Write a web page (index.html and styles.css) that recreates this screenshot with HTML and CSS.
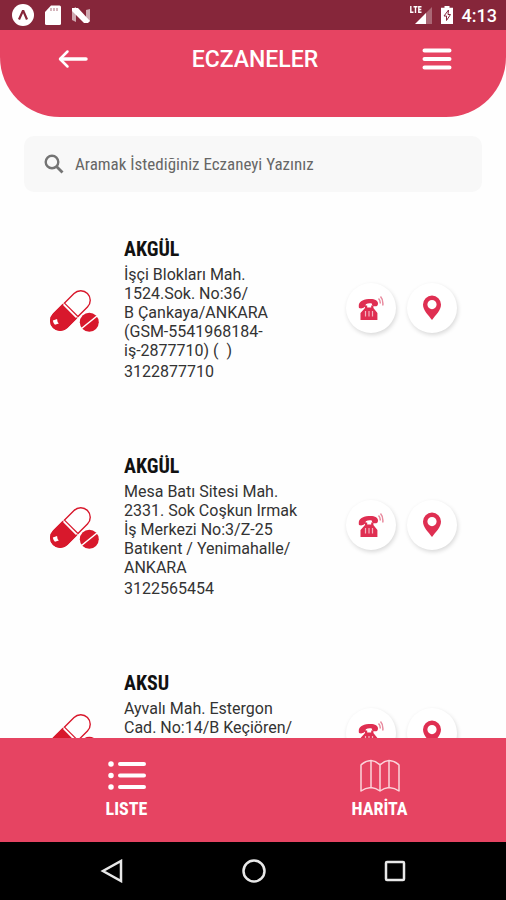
FILE: index.html
```html
<!DOCTYPE html>
<html lang="tr">
<head>
<meta charset="UTF-8">
<meta name="viewport" content="width=device-width, initial-scale=1.0">
<title>Eczaneler</title>
<link rel="stylesheet" href="styles.css">
</head>
<body>

<!-- Icons used more than once -->
<svg class="sprite" aria-hidden="true">
    <symbol id="pills" viewBox="0 -1 50 44">
        <g transform="translate(21.5 21.5) rotate(-45)">
            <rect x="-24" y="-9.5" width="48" height="19" rx="9.5" fill="#fff" stroke="#d8182c" stroke-width="1.4"/>
            <path d="M-1.5 -10.2H-14.6a10.2 10.2 0 0 0 0 20.4H-1.5z" fill="#d8182c"/>
            <path d="M0 -10V10" stroke="#fff" stroke-width="1.4"/>
            <path d="M1 -9.5V9.5" stroke="#d8182c" stroke-width="1.2"/>
            <path d="M-21 -1q0 -2.500 1.500 -4.500l4 2q-2 2-2 4.500z" fill="#fff"/>
        </g>
        <circle cx="40.3" cy="33.3" r="10.8" fill="#fff"/>
        <circle cx="40.3" cy="33.3" r="9.5" fill="#d8182c"/>
        <path d="M32.5 39.5L48 27" stroke="#fff" stroke-width="1.6"/>
    </symbol>
    <symbol id="phone" viewBox="0 0 26 26">
        <path d="M1 13C-.2 8 3 4.500 10.500 4c6.500-.4 9.500 1.500 9.500 4.500 0 2-1 2.800-3 2.800-2.200 0-3-.8-3.200-2.800-2.500-.4-4.200-.1-6 .8.2 3.200-3.800 4.900-6.800 3.700z"/>
        <path d="M7 10.500h2.200v2h4v-2h2.200v2.500l4 5V25H2.500v-7L7 13z"/>
        <path d="M7.500 16v5.500M11 16v5.500M14.500 16v5.500" stroke="#f3b4c1" stroke-width="1.200" fill="none"/>
        <path d="M20.500 3.500c1.300 1.200 1.900 2.800 1.800 5M22.500 1.500c1.900 2 2.700 5 2.300 9" stroke="#e88a9e" stroke-width="1.500" fill="none"/>
    </symbol>
    <symbol id="pin" viewBox="0 0 26 26">
        <path fill-rule="evenodd" d="M13 0.500a9 9 0 0 0-9 9C4 15.500 9.500 20 13 25c3.500-5 9-9.500 9-15.500a9 9 0 0 0-9-9zm0 4.500a4.600 4.600 0 1 1 0 9.200 4.600 4.600 0 0 1 0-9.200z"/>
    </symbol>
</svg>

<div class="status-bar">
    <div class="status-left">
        <svg width="22" height="22" viewBox="0 0 22 22">
            <circle cx="11" cy="11" r="11" fill="#fff"/>
            <path d="M7 15.500L10.800 7h.6L15 15.500" fill="none" stroke="#86263a" stroke-width="2.200"/>
        </svg>
        <svg width="16" height="20" viewBox="0 0 16 20">
            <path d="M6 0.500h8.500A1.500 1.500 0 0 1 16 2v16.500a1.500 1.500 0 0 1-1.500 1.500h-13A1.500 1.500 0 0 1 0 18.500V7z" fill="#fff"/>
            <path d="M6 3v3M9 3v3M12 3v3" stroke="#b98590" stroke-width="1.200"/>
        </svg>
        <svg width="18" height="17" viewBox="0 0 18 17">
            <path d="M0 2l4-2v15l-4-2zM14 3l4-1v12l-4 2z" fill="#fff" opacity=".6"/>
            <path d="M0 1h6l12 13-2 2h-4L0 4z" fill="#fff"/>
        </svg>
    </div>
    <div class="status-right">
        <svg width="22" height="18" viewBox="0 0 22 18">
            <path d="M14 9l8-8v17h-8z" fill="#fff" opacity=".3"/>
            <path d="M5 18l11-11v11z" fill="#fff"/>
            <path d="M.8 0v6.200h2.700M3.500.8h4M5.500.8V7M11.500.8H8.800v5.400h2.700M8.800 3.500h2.500" fill="none" stroke="#fff" stroke-width="1.400"/>
        </svg>
        <svg width="12" height="18" viewBox="0 0 12 18">
            <path d="M3.500 0h5v1.800H12V18H0V1.800h3.500z" fill="#fff"/>
            <path d="M7.500 4L3 10h2.500v4.500L9.500 8.500H7z" fill="none" stroke="#86263a" stroke-width="1"/>
        </svg>
        <span class="clock">4:13</span>
    </div>
</div>

<header class="header">
    <button class="icon-button" type="button" aria-label="Geri">
        <svg width="30" height="22" viewBox="0 0 30 22" fill="none" stroke="#fff" stroke-width="3" stroke-linecap="round" stroke-linejoin="round">
            <path d="M28 10H3" stroke-width="3.500"/>
            <path d="M9.500 2.500L2 10l7.500 7.500" stroke-width="2.500"/>
        </svg>
    </button>
    <h1 class="title">ECZANELER</h1>
    <button class="icon-button" type="button" aria-label="Menü">
        <svg width="30" height="26" viewBox="0 0 30 26" stroke="#fff" stroke-width="4" stroke-linecap="round">
            <path d="M2.500 3.500h25M2.500 12h25M2.500 20.500h25"/>
        </svg>
    </button>
</header>

<main class="content">
    <div class="search">
        <label for="search" aria-label="Ara">
            <svg width="20" height="20" viewBox="0 0 20 20" fill="none" stroke="#747474">
                <circle cx="8" cy="8" r="6.300" stroke-width="2.400"/>
                <path d="M12.500 12.500L18.500 18.500" stroke-width="2.800"/>
            </svg>
        </label>
        <input id="search" type="text" placeholder="Aramak İstediğiniz Eczaneyi Yazınız">
    </div>

    <ul class="list">
        <li class="pharmacy">
            <svg class="pills"><use href="#pills"/></svg>
            <div class="info">
                <h2>AKGÜL</h2>
                <p>İşçi Blokları Mah.<br>1524.Sok. No:36/<br>B Çankaya/ANKARA<br>(GSM-5541968184-<br>iş-2877710) ( &nbsp;)</p>
                <p>3122877710</p>
            </div>
            <div class="actions">
                <button class="round" type="button" aria-label="Ara"><svg><use href="#phone"/></svg></button>
                <button class="round" type="button" aria-label="Konum"><svg><use href="#pin"/></svg></button>
            </div>
        </li>
        <li class="pharmacy">
            <svg class="pills"><use href="#pills"/></svg>
            <div class="info">
                <h2>AKGÜL</h2>
                <p>Mesa Batı Sitesi Mah.<br>2331. Sok Coşkun Irmak<br>İş Merkezi No:3/Z-25<br>Batıkent / Yenimahalle/<br>ANKARA</p>
                <p>3122565454</p>
            </div>
            <div class="actions">
                <button class="round" type="button" aria-label="Ara"><svg><use href="#phone"/></svg></button>
                <button class="round" type="button" aria-label="Konum"><svg><use href="#pin"/></svg></button>
            </div>
        </li>
        <li class="pharmacy">
            <svg class="pills"><use href="#pills"/></svg>
            <div class="info">
                <h2>AKSU</h2>
                <p>Ayvalı Mah. Estergon<br>Cad. No:14/B Keçiören/</p>
            </div>
            <div class="actions">
                <button class="round" type="button" aria-label="Ara"><svg><use href="#phone"/></svg></button>
                <button class="round" type="button" aria-label="Konum"><svg><use href="#pin"/></svg></button>
            </div>
        </li>
    </ul>
</main>

<nav class="tabs">
    <a class="tab" href="#liste">
        <svg width="40" height="34" viewBox="0 0 40 34" stroke="#fff" stroke-width="4" stroke-linecap="round">
            <path d="M13 5h24M13 16.500h24M13 28h24"/>
            <path d="M4 5h.01M4 16.500h.01M4 28h.01" stroke-width="5.500"/>
        </svg>
        LISTE
    </a>
    <a class="tab" href="#harita">
        <svg width="40" height="34" viewBox="0 0 40 34" fill="none" stroke="#fbd3da" stroke-width="1.500" stroke-linejoin="round">
            <path d="M1 6q4-4 10-4.500 5 .5 9 4.500 4-4 9-4.500Q35 2 39 6v26q-4-3-10-3.500-5 .5-9 3.500-4-3-9-3.500Q5 29 1 32zM11 1.500v27M20 6v26M29 1.500v27"/>
        </svg>
        HARİTA
    </a>
</nav>

<div class="android-nav">
    <button type="button" aria-label="Geri">
        <svg width="24" height="24" viewBox="0 0 24 24"><path d="M21 2v20L3 12z"/></svg>
    </button>
    <button type="button" aria-label="Ana ekran">
        <svg width="24" height="24" viewBox="0 0 24 24"><circle cx="12" cy="12" r="10.500"/></svg>
    </button>
    <button type="button" aria-label="Son uygulamalar">
        <svg width="24" height="24" viewBox="0 0 24 24"><rect x="3" y="3" width="18" height="18" rx="1"/></svg>
    </button>
</div>

</body>
</html>
```
FILE: styles.css
```css
* {
    box-sizing: border-box;
}
body {
    margin: 0;
    height: 100vh;
    display: flex;
    flex-direction: column;
    overflow: hidden;
    font-family: Roboto, sans-serif;
    background-color: #fefefe;
}
h1, h2, p, ul {
    margin: 0;
    padding: 0;
}
svg {
    display: block;
}
button {
    padding: 0;
    border: none;
    background: none;
    cursor: pointer;
}
.sprite {
    position: absolute;
    width: 0;
    height: 0;
}

/* Status bar */
.status-bar {
    display: flex;
    justify-content: space-between;
    height: 30px;
    padding: 0 9px 0 12px;
    background-color: #86263a;
    color: #fff;
    flex-shrink: 0;
}
.status-left, .status-right {
    display: flex;
    align-items: center;
    gap: 11px;
}
.status-right {
    gap: 9px;
}
.clock {
    font-size: 18px;
    font-weight: 500;
}

/* Header */
.header {
    display: flex;
    justify-content: space-between;
    height: 87px;
    padding: 0 54px 28px 58px;
    background-color: #e64462;
    border-radius: 0 0 60px 60px;
    flex-shrink: 0;
    align-items: center;
}
.title {
    font-size: 23px;
    line-height: 28px;
    font-weight: 500;
    color: #fff;
}

.content {
    flex: 1;
    min-height: 0;
    overflow: hidden;
}

/* Search box */
.search {
    display: flex;
    align-items: center;
    gap: 11px;
    height: 56px;
    margin: 19px 24px 9px;
    padding: 0 20px;
    background-color: #f8f8f8;
    border-radius: 10px;
}
.search input {
    flex: 1;
    min-width: 0;
    border: none;
    outline: none;
    background: none;
    padding: 0;
    font-family: "Roboto Condensed", Roboto, sans-serif;
    font-size: 17px;
}
.search input::placeholder {
    color: #666;
}

/* Pharmacy list */
.list {
    list-style: none;
}
.pharmacy {
    display: flex;
    align-items: center;
    padding: 37px 49px;
}
.pills {
    width: 50px;
    height: 44px;
    margin-right: 25px;
    flex-shrink: 0;
}
.info {
    flex: 1;
    min-height: 124px;
    color: #333;
    font-size: 16px;
    line-height: 19px;
}
.info h2 {
    padding-bottom: 2px;
    font-family: "Roboto Condensed", Roboto, sans-serif;
    font-size: 20px;
    line-height: 23px;
    color: #111;
}
.info p {
    margin-top: 2px;
    white-space: nowrap;
}
.actions {
    display: flex;
    gap: 11px;
    padding-bottom: 3px;
}
.round {
    display: flex;
    align-items: center;
    justify-content: center;
    width: 50px;
    height: 50px;
    border-radius: 50%;
    background-color: #fff;
    box-shadow: 1px 2px 4px rgba(0, 0, 0, 0.15);
}
.round svg {
    width: 26px;
    height: 26px;
    fill: #df2f52;
}

/* Bottom tabs */
.tabs {
    display: flex;
    height: 104px;
    background-color: #e64462;
    flex-shrink: 0;
}
.tab {
    flex: 1;
    display: flex;
    flex-direction: column;
    align-items: center;
    justify-content: center;
    gap: 4px;
    font-family: "Roboto Condensed", Roboto, sans-serif;
    font-size: 18px;
    line-height: 24px;
    font-weight: bold;
    color: #fff;
    text-decoration: none;
}

/* Android buttons */
.android-nav {
    display: flex;
    height: 58px;
    padding: 0 40px 0 41px;
    background-color: #000;
    flex-shrink: 0;
}
.android-nav button {
    flex: 1;
    display: flex;
    align-items: center;
    justify-content: center;
}
.android-nav svg {
    fill: none;
    stroke: #e8e8e8;
    stroke-width: 2.5;
}
```
